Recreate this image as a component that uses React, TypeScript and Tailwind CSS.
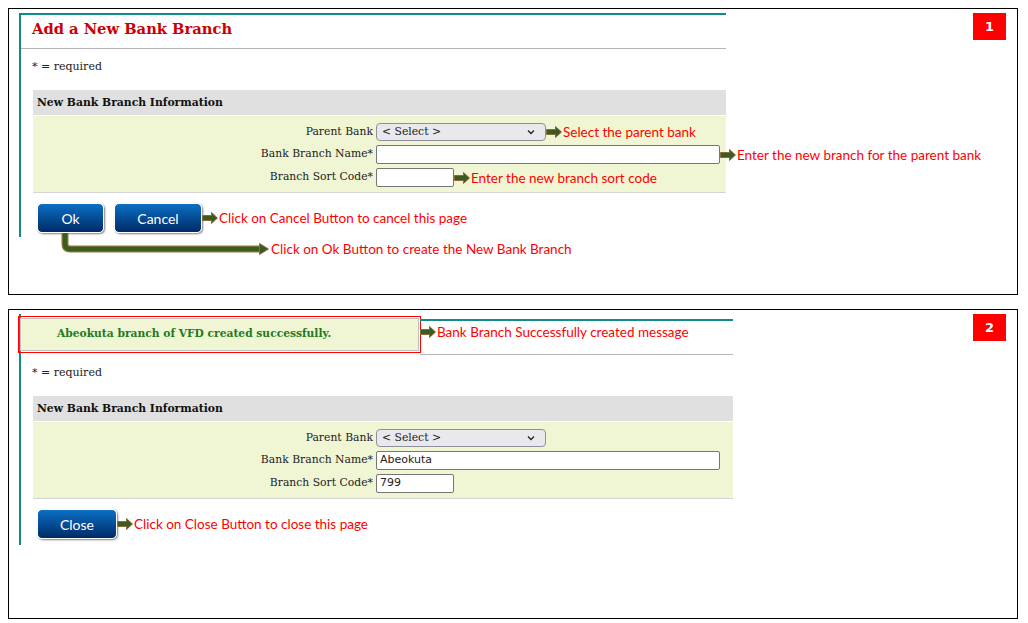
import React from "react";

const serif = "font-['DejaVu_Serif',serif]";
const note = "font-['Lato',sans-serif] text-[13.5px] leading-[16px] text-[#ff0000] whitespace-nowrap";

const Arrow = () => (
  <svg width="16" height="12" viewBox="0 0 16 12" className="shrink-0">
    <path d="M0.5 3.5H9.5V0.5L15.5 6L9.5 11.5V8.5H0.5Z" fill="#3d5a1f" stroke="#8a6a3a" strokeWidth="1" />
  </svg>
);

const Note = ({ text }: { text: string }) => (
  <div className="flex items-center shrink-0">
    <Arrow />
    <span className={`${note} ml-px`}>{text}</span>
  </div>
);

const Badge = ({ n }: { n: string }) => (
  <div className="w-[33px] h-[27px] bg-[#ff0000] text-white font-['DejaVu_Sans',sans-serif] font-bold text-[13px] flex items-center justify-center ml-auto mr-[11px] shrink-0">
    {n}
  </div>
);

const BlueButton = ({ label, className }: { label: string; className: string }) => (
  <button
    className={`h-[30px] shrink-0 rounded-[5px] border border-white bg-[linear-gradient(to_bottom,#0b6fc4,#002a66)] text-white text-[14px] font-['Lato',sans-serif] shadow-[1px_1px_2px_rgba(0,0,0,0.5)] ${className}`}
  >
    {label}
  </button>
);

const Row = ({ label, children }: { label: string; children: React.ReactNode }) => (
  <div className="flex items-center">
    <div className="w-[343px] shrink-0 pr-[3px] text-right whitespace-nowrap">{label}</div>
    {children}
  </div>
);

const SelectBox = () => (
  <div className="w-[170px] h-[18px] rounded-[4px] border border-[#8f8f9d] bg-[#e9e9ed] flex items-center justify-between pl-[5px] pr-[10px] shrink-0">
    <span>&lt; Select &gt;</span>
    <svg width="8" height="6" viewBox="0 0 8 6">
      <path d="M1 1.5L4 4.5L7 1.5" fill="none" stroke="#222" strokeWidth="1.3" />
    </svg>
  </div>
);

const TextBox = ({ w, value }: { w: string; value?: string }) => (
  <div className={`${w} h-[19px] rounded-[2px] border border-[#767676] bg-white px-[3px] flex items-center font-['DejaVu_Sans',sans-serif] text-[11px] shrink-0`}>
    {value}
  </div>
);

const FormSection = ({ filled }: { filled: boolean }) => (
  <div className={`ml-[12px] ${serif} text-[10.8px] text-[#222]`}>
    <div className="h-[25px] bg-[#e0e0e0] flex items-center pl-[4px] pt-[2px] font-bold text-[10.8px] text-[#111]">
      New Bank Branch Information
    </div>
    <div className="mt-px bg-[#f0f5d4] border-b border-[#d5d5d5] pt-[7px] pb-[5px] flex flex-col gap-[4px]">
      <Row label="Parent Bank">
        <SelectBox />
        {!filled && <Note text="Select the parent bank" />}
      </Row>
      <Row label="Bank Branch Name*">
        <TextBox w="w-[344px]" value={filled ? "Abeokuta" : undefined} />
        {!filled && <Note text="Enter the new branch for the parent bank" />}
      </Row>
      <Row label="Branch Sort Code*">
        <TextBox w="w-[78px]" value={filled ? "799" : undefined} />
        {!filled && <Note text="Enter the new branch sort code" />}
      </Row>
    </div>
  </div>
);

const Required = () => (
  <div className={`${serif} text-[11px] leading-[14px] text-[#222] ml-[11px] mt-[11px]`}>* = required</div>
);

export default function App() {
  return (
    <div className="bg-white w-[1028px] h-[623px] pt-[8px] pl-[8px]">
      {/* panel 1 */}
      <div className="w-[1010px] h-[287px] border border-black pt-[4px] pl-[10px] flex items-start">
        <div className="w-[707px] shrink-0 flex flex-col">
          <div className="border-l-2 border-t-2 border-[#138a8a] pb-[4px]">
            <div className="h-[34px] border-b border-[#b5b5b5] flex items-center pl-[11px] pb-[4px]">
              <h1 className={`${serif} font-bold text-[14.7px] text-[#cc0000]`}>Add a New Bank Branch</h1>
            </div>
            <Required />
            <div className="mt-[16px]">
              <FormSection filled={false} />
            </div>
            <div className="mt-[10px] ml-[16px] flex items-center gap-[10px]">
              <BlueButton label="Ok" className="w-[67px]" />
              <div className="flex items-center">
                <BlueButton label="Cancel" className="w-[88px]" />
                <Note text="Click on Cancel Button to cancel this page" />
              </div>
            </div>
          </div>
          <div className="-mt-[4px] ml-[41px] flex items-center">
            <svg width="210" height="24" viewBox="0 0 210 24" className="shrink-0">
              <path d="M5 0V11Q5 16 10 16H200" fill="none" stroke="#8a7a3a" strokeWidth="7" />
              <path d="M5 0V11Q5 16 10 16H200" fill="none" stroke="#3d5a1f" strokeWidth="4.5" />
              <path d="M199.5 10.5L208.5 16L199.5 21.5Z" fill="#3d5a1f" stroke="#8a6a3a" strokeWidth="1" />
            </svg>
            <span className={`${note} ml-px mt-[8px]`}>Click on Ok Button to create the New Bank Branch</span>
          </div>
        </div>
        <Badge n="1" />
      </div>

      {/* panel 2 */}
      <div className="mt-[14px] w-[1010px] h-[310px] border border-black pt-[4px] pl-[10px] flex items-start">
        <div className="w-[714px] shrink-0 flex flex-col">
          <div className="border-l-2 border-[#138a8a] pb-[6px]">
            <div className="flex items-start">
              <div className="-ml-[3px] mt-[2px] border border-[#ff0000] p-px">
                <div className={`w-[399px] h-[33px] bg-[#f0f5d4] border border-[#c0c0c0] flex items-center pl-[36px] ${serif} font-bold text-[10.7px] text-[#1e7b1e]`}>
                  Abeokuta branch of VFD created successfully.
                </div>
              </div>
              <div className="flex-1 mt-[5px] h-[36px] border-t-2 border-t-[#138a8a] border-b border-b-[#b5b5b5] flex items-center -ml-px pb-[11px]">
                <Note text="Bank Branch Successfully created message" />
              </div>
            </div>
            <Required />
            <div className="mt-[16px]">
              <FormSection filled={true} />
            </div>
            <div className="mt-[10px] ml-[16px] flex items-center">
              <BlueButton label="Close" className="w-[80px]" />
              <Note text="Click on Close Button to close this page" />
            </div>
          </div>
        </div>
        <Badge n="2" />
      </div>
    </div>
  );
}
